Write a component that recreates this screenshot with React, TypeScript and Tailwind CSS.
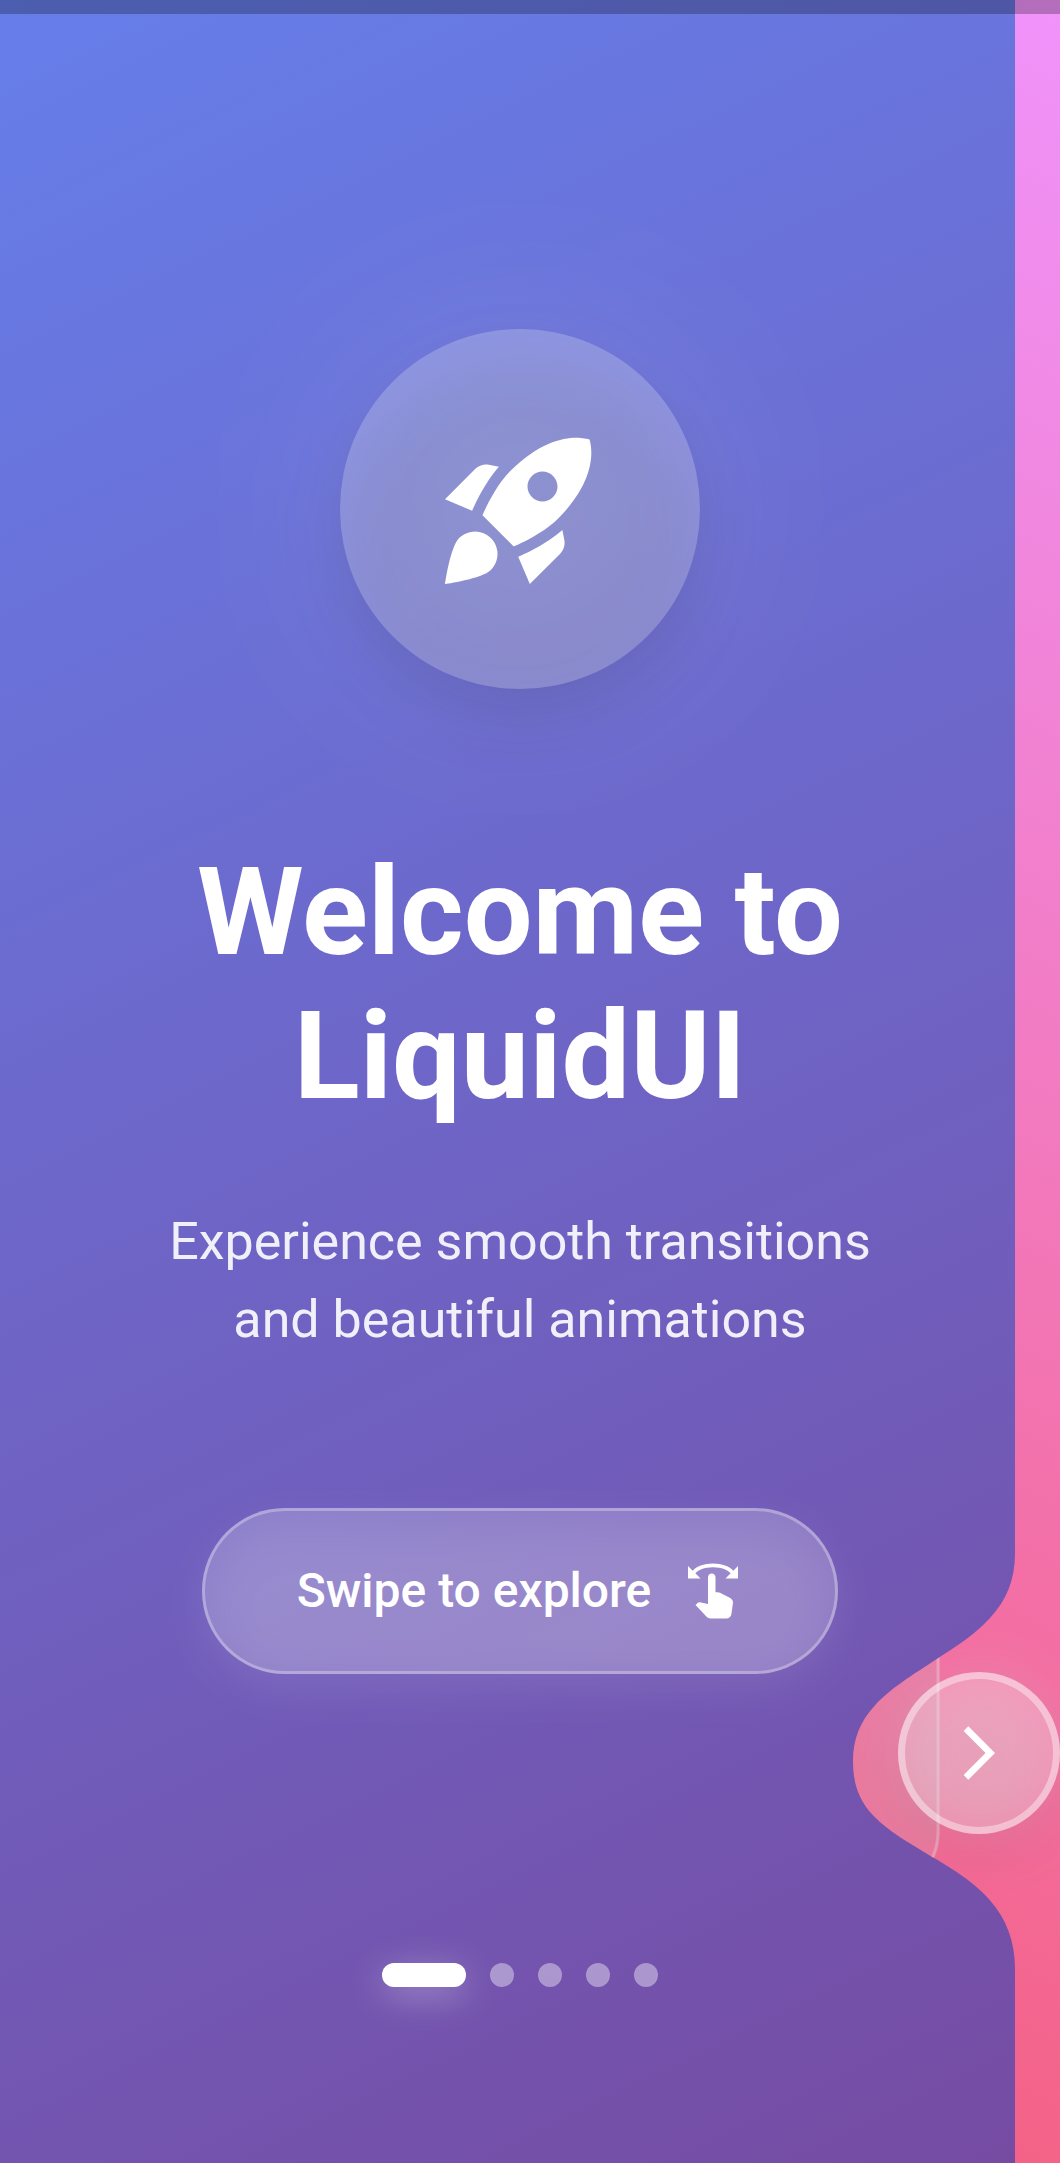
import React from "react";
import { MdArrowForwardIos, MdRocketLaunch, MdSwipe } from "react-icons/md";

const steps = [
  "Welcome",
  "Design",
  "Motion",
  "Gestures",
  "Get started",
];

/* Liquid edge of the next page: straight side strip with one bulge. */
function liquidEdge(edge: number, centerY: number, h: number, r: number) {
  const pts: [number, number][] = [
    [0, 0.1346], [0.0534, 0.2413], [0.1562, 0.3322],
    [0.2362, 0.4031], [0.3305, 0.4561], [0.5012, 0.5351],
    [0.5159, 0.5418], [0.5664, 0.565], [0.5749, 0.569],
    [0.7284, 0.6397], [0.8087, 0.6833], [0.8774, 0.7399],
    [0.9653, 0.8123], [1, 0.8936], [1, 1],
    [1, 1.1001], [0.9596, 1.1888], [0.8608, 1.2705],
    [0.7852, 1.3331], [0.7034, 1.3796], [0.5291, 1.4665],
    [0.5242, 1.469], [0.5057, 1.4782], [0.5015, 1.4803],
    [0.3187, 1.5714], [0.2332, 1.6204], [0.1541, 1.6874],
    [0.051, 1.7748], [0, 1.8709], [0, 2],
  ];
  const bottom = centerY + r;
  const curve = pts.map(([x, y]) => `${edge - h * x} ${bottom - r * y}`).join(" ");
  return `M1060 2163 H${edge} V${bottom} C${curve} V0 H1060 Z`;
}

function NextPage() {
  return (
    <svg
      className="pointer-events-none absolute inset-y-0 right-0 h-full w-[240px]"
      viewBox="820 0 240 2163"
      preserveAspectRatio="none"
      aria-hidden="true"
    >
      <defs>
        {/* Runs from the page's top right corner to its bottom left one. */}
        <linearGradient id="pink" gradientUnits="userSpaceOnUse" x1="1060" y1="0" x2="0" y2="2163">
          <stop offset="0" stopColor="#f093fb" />
          <stop offset="1" stopColor="#f5576c" />
        </linearGradient>
        <clipPath id="edge">
          <path d={liquidEdge(1015, 1761, 162, 208)} />
        </clipPath>
        <filter id="soft" x="-60%" y="-60%" width="220%" height="220%">
          <feGaussianBlur stdDeviation="26" />
        </filter>
      </defs>
      <g clipPath="url(#edge)">
        <rect x="820" width="240" height="2163" fill="url(#pink)" />
        <rect x="400" y="1520" width="540" height="373" rx="60" fill="#000" fillOpacity="0.05" />
        <rect x="400" y="1520" width="540" height="373" rx="60" fill="#fff" fillOpacity="0.14" />
        <rect x="400" y="1520" width="538" height="371" rx="59" fill="none" stroke="#fff" strokeOpacity="0.25" strokeWidth="3" />
        <circle cx="979" cy="1768" r="81" fill="#000" fillOpacity="0.1" filter="url(#soft)" />
        <circle cx="979" cy="1753" r="81" fill="#fff" fillOpacity="0.2" filter="url(#soft)" />
      </g>
    </svg>
  );
}

export default function App() {
  return (
    <div className="relative flex min-h-screen flex-col overflow-hidden bg-[linear-gradient(153.9deg,#667eea,#764ba2)] font-['Roboto',sans-serif] text-white">
      <NextPage />
      <div className="absolute inset-x-0 top-0 h-3.5 bg-black/25" />

      <main className="relative flex flex-1 flex-col items-center pt-[329px] pr-5 text-center">
        <div className="relative flex size-[360px] items-center justify-center">
          <div className="absolute inset-0 rounded-full bg-white/12 blur-[90px]" />
          <div className="absolute inset-x-0 top-[30px] h-[360px] rounded-full bg-black/10 blur-[30px]" />
          <div className="absolute inset-0 rounded-full bg-white/22" />
          <MdRocketLaunch className="relative size-[180px]" aria-hidden="true" />
        </div>

        <h1 className="mt-[152px] max-w-[760px] text-[122px] leading-[144px] font-bold">
          Welcome to LiquidUI
        </h1>
        <p className="mt-[74px] max-w-[760px] text-[52px] leading-[78px] text-white/90">
          Experience smooth transitions and beautiful animations
        </p>

        <button type="button" className="relative mt-[149px] flex items-center gap-8 rounded-full border-[3px] border-white/30 bg-white/20 px-[92px] py-[50px] text-[48px] leading-[60px] font-medium">
          <span className="absolute inset-x-0 top-[15px] h-full rounded-full bg-white/10 blur-[24px]" />
          <span className="relative">Swipe to explore</span>
          <MdSwipe className="relative size-[60px]" aria-hidden="true" />
        </button>
      </main>

      <nav className="relative flex justify-center gap-6 pr-5 pb-44" aria-label="Pages">
        {steps.map((step, i) => (
          <button
            key={step}
            type="button"
            aria-label={step}
            aria-current={i === 0 ? "step" : undefined}
            className={
              i === 0
                ? "h-6 w-[84px] rounded-full bg-white shadow-[0_8px_36px_rgba(255,255,255,0.35)]"
                : "size-6 rounded-full bg-white/40"
            }
          />
        ))}
      </nav>

      <button
        type="button"
        aria-label="Next page"
        className="absolute right-0 bottom-[329px] flex size-[162px] items-center justify-center rounded-full border-[7px] border-white/40 bg-white/25"
      >
        <MdArrowForwardIos className="size-16" aria-hidden="true" />
      </button>
    </div>
  );
}
